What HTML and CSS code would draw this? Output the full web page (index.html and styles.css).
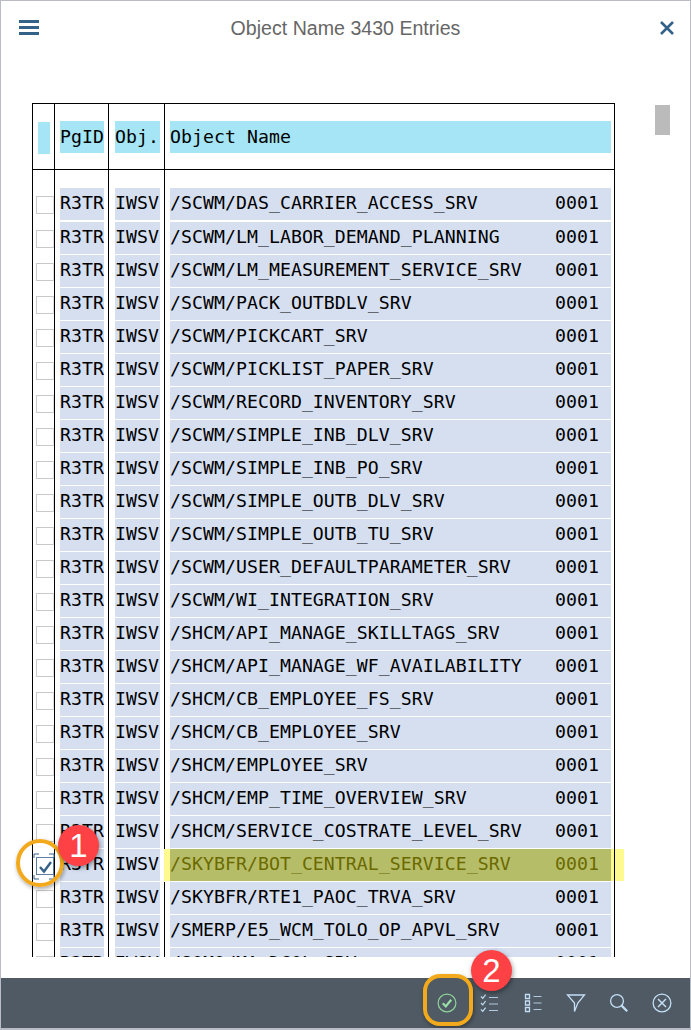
FILE: index.html
```html
<!DOCTYPE html>
<html lang="en">
<head>
<meta charset="utf-8">
<title>Object Name 3430 Entries</title>
<link rel="stylesheet" href="styles.css">
</head>
<body>
<div class="dialog">
  <header class="topbar">
    <svg class="menu-icon" width="20" height="15" viewBox="0 0 20 15"><path d="M0 1.5h20M0 7.5h20M0 13.5h20" stroke="#346187" stroke-width="3"/></svg>
    <h1 class="title">Object Name 3430 Entries</h1>
    <svg class="close-icon" width="14" height="14" viewBox="0 0 14 14"><path d="M1 1l12 12M13 1L1 13" stroke="#346187" stroke-width="2.6"/></svg>
  </header>
  <main class="content">
    <div class="table-clip">
      <table class="grid">
        <thead>
          <tr>
            <th><div class="cell head mark"></div></th>
            <th><div class="cell head">PgID</div></th>
            <th><div class="cell head">Obj.</div></th>
            <th class="wide"><div class="cell head">Object Name</div></th>
          </tr>
        </thead>
        <tbody>
          <tr><td><span class="box"></span></td><td><div class="cell">R3TR</div></td><td><div class="cell">IWSV</div></td><td class="wide"><div class="cell name"><span>/SCWM/DAS_CARRIER_ACCESS_SRV</span><span>0001</span></div></td></tr>
          <tr><td><span class="box"></span></td><td><div class="cell">R3TR</div></td><td><div class="cell">IWSV</div></td><td class="wide"><div class="cell name"><span>/SCWM/LM_LABOR_DEMAND_PLANNING</span><span>0001</span></div></td></tr>
          <tr><td><span class="box"></span></td><td><div class="cell">R3TR</div></td><td><div class="cell">IWSV</div></td><td class="wide"><div class="cell name"><span>/SCWM/LM_MEASUREMENT_SERVICE_SRV</span><span>0001</span></div></td></tr>
          <tr><td><span class="box"></span></td><td><div class="cell">R3TR</div></td><td><div class="cell">IWSV</div></td><td class="wide"><div class="cell name"><span>/SCWM/PACK_OUTBDLV_SRV</span><span>0001</span></div></td></tr>
          <tr><td><span class="box"></span></td><td><div class="cell">R3TR</div></td><td><div class="cell">IWSV</div></td><td class="wide"><div class="cell name"><span>/SCWM/PICKCART_SRV</span><span>0001</span></div></td></tr>
          <tr><td><span class="box"></span></td><td><div class="cell">R3TR</div></td><td><div class="cell">IWSV</div></td><td class="wide"><div class="cell name"><span>/SCWM/PICKLIST_PAPER_SRV</span><span>0001</span></div></td></tr>
          <tr><td><span class="box"></span></td><td><div class="cell">R3TR</div></td><td><div class="cell">IWSV</div></td><td class="wide"><div class="cell name"><span>/SCWM/RECORD_INVENTORY_SRV</span><span>0001</span></div></td></tr>
          <tr><td><span class="box"></span></td><td><div class="cell">R3TR</div></td><td><div class="cell">IWSV</div></td><td class="wide"><div class="cell name"><span>/SCWM/SIMPLE_INB_DLV_SRV</span><span>0001</span></div></td></tr>
          <tr><td><span class="box"></span></td><td><div class="cell">R3TR</div></td><td><div class="cell">IWSV</div></td><td class="wide"><div class="cell name"><span>/SCWM/SIMPLE_INB_PO_SRV</span><span>0001</span></div></td></tr>
          <tr><td><span class="box"></span></td><td><div class="cell">R3TR</div></td><td><div class="cell">IWSV</div></td><td class="wide"><div class="cell name"><span>/SCWM/SIMPLE_OUTB_DLV_SRV</span><span>0001</span></div></td></tr>
          <tr><td><span class="box"></span></td><td><div class="cell">R3TR</div></td><td><div class="cell">IWSV</div></td><td class="wide"><div class="cell name"><span>/SCWM/SIMPLE_OUTB_TU_SRV</span><span>0001</span></div></td></tr>
          <tr><td><span class="box"></span></td><td><div class="cell">R3TR</div></td><td><div class="cell">IWSV</div></td><td class="wide"><div class="cell name"><span>/SCWM/USER_DEFAULTPARAMETER_SRV</span><span>0001</span></div></td></tr>
          <tr><td><span class="box"></span></td><td><div class="cell">R3TR</div></td><td><div class="cell">IWSV</div></td><td class="wide"><div class="cell name"><span>/SCWM/WI_INTEGRATION_SRV</span><span>0001</span></div></td></tr>
          <tr><td><span class="box"></span></td><td><div class="cell">R3TR</div></td><td><div class="cell">IWSV</div></td><td class="wide"><div class="cell name"><span>/SHCM/API_MANAGE_SKILLTAGS_SRV</span><span>0001</span></div></td></tr>
          <tr><td><span class="box"></span></td><td><div class="cell">R3TR</div></td><td><div class="cell">IWSV</div></td><td class="wide"><div class="cell name"><span>/SHCM/API_MANAGE_WF_AVAILABILITY</span><span>0001</span></div></td></tr>
          <tr><td><span class="box"></span></td><td><div class="cell">R3TR</div></td><td><div class="cell">IWSV</div></td><td class="wide"><div class="cell name"><span>/SHCM/CB_EMPLOYEE_FS_SRV</span><span>0001</span></div></td></tr>
          <tr><td><span class="box"></span></td><td><div class="cell">R3TR</div></td><td><div class="cell">IWSV</div></td><td class="wide"><div class="cell name"><span>/SHCM/CB_EMPLOYEE_SRV</span><span>0001</span></div></td></tr>
          <tr><td><span class="box"></span></td><td><div class="cell">R3TR</div></td><td><div class="cell">IWSV</div></td><td class="wide"><div class="cell name"><span>/SHCM/EMPLOYEE_SRV</span><span>0001</span></div></td></tr>
          <tr><td><span class="box"></span></td><td><div class="cell">R3TR</div></td><td><div class="cell">IWSV</div></td><td class="wide"><div class="cell name"><span>/SHCM/EMP_TIME_OVERVIEW_SRV</span><span>0001</span></div></td></tr>
          <tr><td><span class="box"></span></td><td><div class="cell">R3TR</div></td><td><div class="cell">IWSV</div></td><td class="wide"><div class="cell name"><span>/SHCM/SERVICE_COSTRATE_LEVEL_SRV</span><span>0001</span></div></td></tr>
          <tr class="picked"><td><span class="box checked"><svg class="focus" width="22" height="27" viewBox="0 0 22 27"><path d="M1 5V1h5M16 1h5v4M21 22v4h-5M6 26H1v-4" fill="none" stroke="#346187" stroke-width="1"/><path d="M7 14l4 4.5 7-9.5" fill="none" stroke="#346187" stroke-width="2.4"/></svg></span></td><td><div class="cell">R3TR</div></td><td><div class="cell">IWSV</div></td><td class="wide"><div class="glow"></div><div class="cell name"><span>/SKYBFR/BOT_CENTRAL_SERVICE_SRV</span><span>0001</span></div></td></tr>
          <tr><td><span class="box"></span></td><td><div class="cell">R3TR</div></td><td><div class="cell">IWSV</div></td><td class="wide"><div class="cell name"><span>/SKYBFR/RTE1_PAOC_TRVA_SRV</span><span>0001</span></div></td></tr>
          <tr><td><span class="box"></span></td><td><div class="cell">R3TR</div></td><td><div class="cell">IWSV</div></td><td class="wide"><div class="cell name"><span>/SMERP/E5_WCM_TOLO_OP_APVL_SRV</span><span>0001</span></div></td></tr>
          <tr><td><span class="box"></span></td><td><div class="cell">R3TR</div></td><td><div class="cell">IWSV</div></td><td class="wide"><div class="cell name"><span>/SOMO/MA_DCOL_SRV</span><span>0001</span></div></td></tr>
        </tbody>
      </table>
    </div>
    <div class="scroll-thumb"></div>
  </main>
  <footer class="toolbar">
    <svg class="tool" width="20" height="20" viewBox="0 0 20 20"><circle cx="10" cy="10" r="8.9" fill="none" stroke="#8fd39a" stroke-width="1.2"/><path d="M5.8 10.2l3 3.2 5.4-6.6" fill="none" stroke="#9be0a6" stroke-width="2.2"/></svg>
    <svg class="tool" width="20" height="20" viewBox="0 0 20 20"><g fill="none" stroke="#c3def5" stroke-width="1.2"><path d="M1 3.5l1.8 1.8L5.6 1.6M1 10l1.8 1.8L5.6 8M1 16.5l1.8 1.8L5.6 14.6"/></g><path d="M9 4.5h9M9 11h9M9 17.5h9" stroke="#c3def5" stroke-width="1" opacity=".85"/></svg>
    <svg class="tool" width="20" height="20" viewBox="0 0 20 20"><g fill="none" stroke="#c3def5" stroke-width="1.3"><path d="M2.5 1.5h4v4h-4zM2.5 8h4v4h-4zM2.5 14.5h4v4h-4z"/></g><path d="M10.5 3.5h8M10.5 10h8M10.5 16.5h8" stroke="#c3def5" stroke-width="1" opacity=".85"/></svg>
    <svg class="tool" width="20" height="20" viewBox="0 0 20 20"><path d="M1.5 2h17l-6.7 8-3.3 8.5V10z" fill="none" stroke="#c3def5" stroke-width="1.3"/></svg>
    <svg class="tool" width="20" height="20" viewBox="0 0 20 20"><circle cx="8" cy="8" r="6.4" fill="none" stroke="#c3def5" stroke-width="1.3"/><path d="M12.6 12.6l5.6 5.6" stroke="#c3def5" stroke-width="2.2"/></svg>
    <svg class="tool" width="20" height="20" viewBox="0 0 20 20"><circle cx="10" cy="10" r="8.9" fill="none" stroke="#c3def5" stroke-width="1.3"/><path d="M6 6l8 8M14 6l-8 8" stroke="#c3def5" stroke-width="1.5"/></svg>
  </footer>
  <div class="ring ring-check"></div>
  <div class="ring ring-ok"></div>
  <div class="badge badge-one">1</div>
  <div class="badge badge-two">2</div>
</div>
</body>
</html>
```
FILE: styles.css
```css
* { box-sizing: border-box; }
html, body { margin: 0; height: 100%; background: #fff; overflow: hidden; }
.dialog {
  position: relative;
  z-index: 0;
  width: 691px;
  height: 1030px;
  display: flex;
  flex-direction: column;
  background: #fff;
  border: 1px solid #b9bcc6;
  border-width: 1px 1px 2px 1px;
  overflow: hidden;
}
.topbar {
  height: 55px;
  flex: none;
  display: flex;
  justify-content: space-between;
  align-items: flex-start;
  padding: 19px 16px 0 18px;
  position: relative;
}
.menu-icon { display: block; }
.close-icon { display: block; margin-top: 1px; }
.title {
  position: absolute;
  left: 0;
  right: 0;
  top: 14px;
  margin: 0;
  text-align: center;
  font: 400 19.6px/26px "Liberation Sans", Arial, sans-serif;
  color: #666;
}
.content {
  flex: 1;
  min-height: 0;
  position: relative;
  padding: 47px 0 21px 31px;
  display: flex;
}
.table-clip {
  width: 594px;
  overflow: hidden;
  height: 100%;
}
.grid {
  border-collapse: collapse;
  table-layout: fixed;
  width: 583px;
  font: 400 18.2px/30px "DejaVu Sans Mono", monospace;
  color: #000;
}
.grid th, .grid td {
  padding: 0;
  border-left: 1px solid #000;
  border-right: 1px solid #000;
  position: relative;
  font-weight: 400;
  width: 54px;
}
.grid th:first-child, .grid td:first-child { width: 22px; }
.grid th:nth-child(3), .grid td:nth-child(3) { width: 56px; }
.grid .wide { width: 450px; }
.grid th {
  height: 66px;
  border-top: 1px solid #000;
  border-bottom: 1px solid #000;
  padding-top: 2px;
  line-height: 32px;
}
.grid td { height: 33px; vertical-align: top; }
.grid tbody tr:first-child td { height: 52px; padding-top: 18px; }
.cell {
  height: 32px;
  margin: 0 4px 1px 5px;
  background: #d5dff0;
  text-align: left;
  white-space: pre;
  letter-spacing: 0.04px;
}
th:nth-child(3) .cell, td:nth-child(3) .cell { margin-left: 6px; }
.head { background: #a5e5f5; }
.mark { margin: 0 4px 0 5px; }
.name {
  display: flex;
  justify-content: space-between;
  padding-right: 12px;
}
.wide .cell { margin-right: 3px; }
.box {
  display: block;
  position: relative;
  width: 18px;
  height: 18px;
  margin: 8px 0 0 3px;
  border: 1px solid #c9c9c9;
  border-right-color: #e2e2e2;
  background: #fff;
}
.box.checked { border-color: #5d7fa3; }
.focus { position: absolute; left: -4px; top: -5px; display: block; }
.picked .name { background: #b6bd68; color: #6b6a00; position: relative; }
.glow {
  position: absolute;
  left: -1px;
  top: 0;
  width: 460px;
  height: 32px;
  background: #fffa8f;
  z-index: -1;
}
.picked td:nth-child(3) { border-right-color: #fffa8f; }
.picked .wide { border-left-color: #fffa8f; }
.scroll-thumb {
  position: absolute;
  left: 654px;
  top: 49px;
  width: 15px;
  height: 30px;
  background: #bbb;
}
.toolbar {
  flex: none;
  height: 50px;
  background: #4f5a64;
  display: flex;
  justify-content: flex-end;
  align-items: center;
  gap: 23px;
  padding-right: 18px;
}
.tool { display: block; }
.ring {
  position: absolute;
  border: 4px solid #f2a91c;
  box-shadow: 1px 2px 4px rgba(0,0,0,.35);
}
.ring-check { left: 15px; top: 838px; width: 48px; height: 48px; border-radius: 50%; }
.ring-ok { left: 422px; top: 973px; width: 50px; height: 52px; border-radius: 17px; }
.badge {
  position: absolute;
  width: 41px;
  height: 41px;
  border-radius: 50%;
  background: #fd4145;
  color: #fff;
  font: 400 33px/41px "Liberation Sans", Arial, sans-serif;
  text-align: center;
  box-shadow: 1px 2px 5px rgba(0,0,0,.4);
}
.badge-one { left: 57px; top: 824px; }
.badge-two { left: 470px; top: 949px; }
```
